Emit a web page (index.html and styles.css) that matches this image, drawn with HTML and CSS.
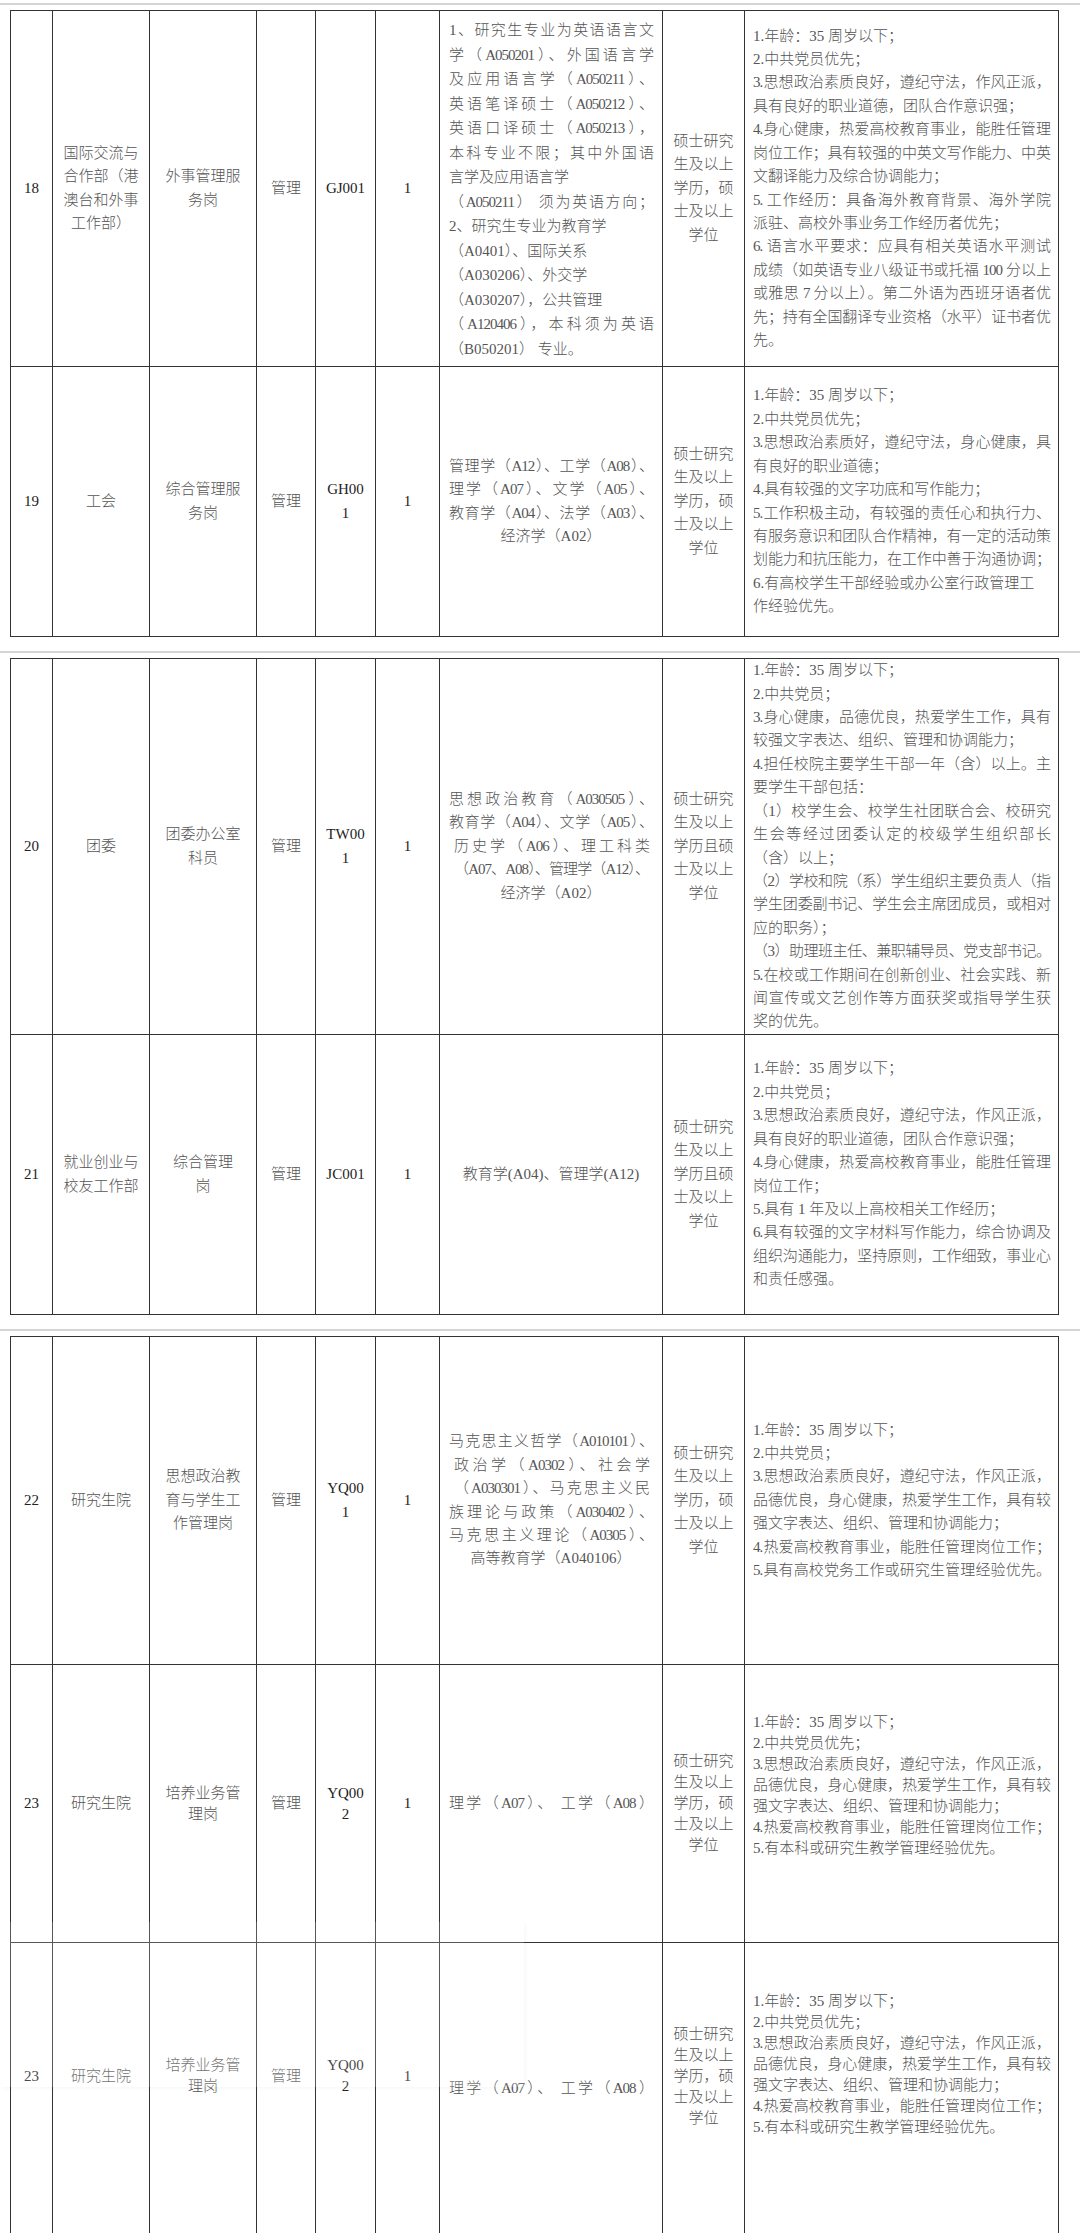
FILE: index.html
```html
<!DOCTYPE html>
<html lang="zh-CN">
<head>
<meta charset="utf-8">
<title>岗位表</title>
<link rel="stylesheet" href="styles.css">
</head>
<body>

<div class="shot first">
<table class="grid">
<colgroup><col class="c-no"><col class="c-dept"><col class="c-pos"><col class="c-type"><col class="c-code"><col class="c-num"><col class="c-major"><col class="c-edu"><col class="c-req"></colgroup>
<tr class="r18">
<td class="lat">18</td>
<td>国际交流与<br>合作部（港<br>澳台和外事<br>工作部）</td>
<td>外事管理服<br>务岗</td>
<td>管理</td>
<td class="lat">GJ001</td>
<td class="lat">1</td>
<td class="major tall">
<div class="f">1、研究生专业为英语语言文</div>
<div class="f">学（A050201）、外国语言学</div>
<div class="f">及应用语言学（A050211）、</div>
<div class="f">英语笔译硕士（A050212）、</div>
<div class="f">英语口译硕士（A050213），</div>
<div class="f">本科专业不限；其中外国语</div>
<div>言学及应用语言学</div>
<div class="f">（A050211） 须为英语方向；</div>
<div>2、研究生专业为教育学</div>
<div>（A0401）、国际关系</div>
<div>（A030206）、外交学</div>
<div>（A030207），公共管理</div>
<div class="f">（A120406），本科须为英语</div>
<div>（B050201） 专业。</div>
</td>
<td>硕士研究<br>生及以上<br>学历，硕<br>士及以上<br>学位</td>
<td class="req">
<div>1.年龄：35 周岁以下；</div>
<div>2.中共党员优先；</div>
<div class="f">3.思想政治素质良好，遵纪守法，作风正派，</div>
<div>具有良好的职业道德，团队合作意识强；</div>
<div class="f">4.身心健康，热爱高校教育事业，能胜任管理</div>
<div class="f">岗位工作；具有较强的中英文写作能力、中英</div>
<div>文翻译能力及综合协调能力；</div>
<div class="f">5. 工作经历：具备海外教育背景、海外学院</div>
<div>派驻、高校外事业务工作经历者优先；</div>
<div class="f">6. 语言水平要求：应具有相关英语水平测试</div>
<div class="f">成绩（如英语专业八级证书或托福 100 分以上</div>
<div class="f">或雅思 7 分以上）。第二外语为西班牙语者优</div>
<div class="f">先；持有全国翻译专业资格（水平）证书者优</div>
<div>先。</div>
</td>
</tr>
<tr class="r19">
<td class="lat">19</td>
<td>工会</td>
<td>综合管理服<br>务岗</td>
<td>管理</td>
<td class="lat">GH00<br>1</td>
<td class="lat">1</td>
<td class="major">
<div class="f">管理学（A12）、工学（A08）、</div>
<div class="f">理学（A07）、文学（A05）、</div>
<div class="f">教育学（A04）、法学（A03）、</div>
<div class="c">经济学（A02）</div>
</td>
<td>硕士研究<br>生及以上<br>学历，硕<br>士及以上<br>学位</td>
<td class="req">
<div>1.年龄：35 周岁以下；</div>
<div>2.中共党员优先；</div>
<div class="f">3.思想政治素质好，遵纪守法，身心健康，具</div>
<div>有良好的职业道德；</div>
<div>4.具有较强的文字功底和写作能力；</div>
<div class="f">5.工作积极主动，有较强的责任心和执行力、</div>
<div class="f">有服务意识和团队合作精神，有一定的活动策</div>
<div class="f">划能力和抗压能力，在工作中善于沟通协调；</div>
<div>6.有高校学生干部经验或办公室行政管理工</div>
<div>作经验优先。</div>
</td>
</tr>
</table>
</div>

<div class="shot">
<table class="grid">
<colgroup><col class="c-no"><col class="c-dept"><col class="c-pos"><col class="c-type"><col class="c-code"><col class="c-num"><col class="c-major"><col class="c-edu"><col class="c-req"></colgroup>
<tr class="r20">
<td class="lat">20</td>
<td>团委</td>
<td>团委办公室<br>科员</td>
<td>管理</td>
<td class="lat">TW00<br>1</td>
<td class="lat">1</td>
<td class="major">
<div class="f">思想政治教育（A030505）、</div>
<div class="f">教育学（A04）、文学（A05）、</div>
<div class="f in">历史学（A06）、理工科类</div>
<div class="f in">（A07、A08）、管理学（A12）、</div>
<div class="c">经济学（A02）</div>
</td>
<td>硕士研究<br>生及以上<br>学历且硕<br>士及以上<br>学位</td>
<td class="req">
<div>1.年龄：35 周岁以下；</div>
<div>2.中共党员；</div>
<div class="f">3.身心健康，品德优良，热爱学生工作，具有</div>
<div>较强文字表达、组织、管理和协调能力；</div>
<div class="f">4.担任校院主要学生干部一年（含）以上。主</div>
<div>要学生干部包括：</div>
<div class="f">（1）校学生会、校学生社团联合会、校研究</div>
<div class="f">生会等经过团委认定的校级学生组织部长</div>
<div>（含）以上；</div>
<div class="f">（2）学校和院（系）学生组织主要负责人（指</div>
<div class="f">学生团委副书记、学生会主席团成员，或相对</div>
<div>应的职务）；</div>
<div class="f">（3）助理班主任、兼职辅导员、党支部书记。</div>
<div class="f">5.在校或工作期间在创新创业、社会实践、新</div>
<div class="f">闻宣传或文艺创作等方面获奖或指导学生获</div>
<div>奖的优先。</div>
</td>
</tr>
<tr class="r21">
<td class="lat">21</td>
<td>就业创业与<br>校友工作部</td>
<td>综合管理<br>岗</td>
<td>管理</td>
<td class="lat">JC001</td>
<td class="lat">1</td>
<td class="major">
<div class="c">教育学(A04)、管理学(A12)</div>
</td>
<td>硕士研究<br>生及以上<br>学历且硕<br>士及以上<br>学位</td>
<td class="req">
<div>1.年龄：35 周岁以下；</div>
<div>2.中共党员；</div>
<div class="f">3.思想政治素质良好，遵纪守法，作风正派，</div>
<div>具有良好的职业道德，团队合作意识强；</div>
<div class="f">4.身心健康，热爱高校教育事业，能胜任管理</div>
<div>岗位工作；</div>
<div>5.具有 1 年及以上高校相关工作经历；</div>
<div class="f">6.具有较强的文字材料写作能力，综合协调及</div>
<div class="f">组织沟通能力，坚持原则，工作细致，事业心</div>
<div>和责任感强。</div>
</td>
</tr>
</table>
</div>

<div class="shot last">
<table class="grid">
<colgroup><col class="c-no"><col class="c-dept"><col class="c-pos"><col class="c-type"><col class="c-code"><col class="c-num"><col class="c-major"><col class="c-edu"><col class="c-req"></colgroup>
<tr class="r22">
<td class="lat">22</td>
<td>研究生院</td>
<td>思想政治教<br>育与学生工<br>作管理岗</td>
<td>管理</td>
<td class="lat">YQ00<br>1</td>
<td class="lat">1</td>
<td class="major">
<div class="f">马克思主义哲学（A010101）、</div>
<div class="f in">政治学（A0302）、社会学</div>
<div class="f in">（A030301）、马克思主义民</div>
<div class="f">族理论与政策（A030402）、</div>
<div class="f">马克思主义理论（A0305）、</div>
<div class="c">高等教育学（A040106）</div>
</td>
<td>硕士研究<br>生及以上<br>学历，硕<br>士及以上<br>学位</td>
<td class="req">
<div>1.年龄：35 周岁以下；</div>
<div>2.中共党员；</div>
<div class="f">3.思想政治素质良好，遵纪守法，作风正派，</div>
<div class="f">品德优良，身心健康，热爱学生工作，具有较</div>
<div>强文字表达、组织、管理和协调能力；</div>
<div class="f">4.热爱高校教育事业，能胜任管理岗位工作；</div>
<div class="f">5.具有高校党务工作或研究生管理经验优先。</div>
</td>
</tr>
<tr class="r23">
<td class="lat">23</td>
<td>研究生院</td>
<td>培养业务管<br>理岗</td>
<td>管理</td>
<td class="lat">YQ00<br>2</td>
<td class="lat">1</td>
<td class="major">
<div class="f">理学（A07）、 工学（A08）</div>
</td>
<td>硕士研究<br>生及以上<br>学历，硕<br>士及以上<br>学位</td>
<td class="req">
<div>1.年龄：35 周岁以下；</div>
<div>2.中共党员优先；</div>
<div class="f">3.思想政治素质良好，遵纪守法，作风正派，</div>
<div class="f">品德优良，身心健康，热爱学生工作，具有较</div>
<div>强文字表达、组织、管理和协调能力；</div>
<div class="f">4.热爱高校教育事业，能胜任管理岗位工作；</div>
<div>5.有本科或研究生教学管理经验优先。</div>
</td>
</tr>
<tr class="r23b">
<td class="lat">23</td>
<td>研究生院</td>
<td>培养业务管<br>理岗</td>
<td>管理</td>
<td class="lat">YQ00<br>2</td>
<td class="lat">1</td>
<td class="major">
<div class="f">理学（A07）、 工学（A08）</div>
</td>
<td>硕士研究<br>生及以上<br>学历，硕<br>士及以上<br>学位</td>
<td class="req">
<div>1.年龄：35 周岁以下；</div>
<div>2.中共党员优先；</div>
<div class="f">3.思想政治素质良好，遵纪守法，作风正派，</div>
<div class="f">品德优良，身心健康，热爱学生工作，具有较</div>
<div>强文字表达、组织、管理和协调能力；</div>
<div class="f">4.热爱高校教育事业，能胜任管理岗位工作；</div>
<div>5.有本科或研究生教学管理经验优先。</div>
</td>
</tr>
</table>
</div>

<div class="ghost"></div>

</body>
</html>
```

FILE: styles.css
```css
html {
  margin: 0;
  padding: 0;
  height: 2233px;
  overflow: hidden;
  background: #ffffff;
}

body {
  position: relative;
  margin: 0;
  padding: 0;
  height: 2233px;
  overflow: hidden;
  font-family: "Liberation Serif", "Noto Sans CJK SC", serif;
  font-size: 15px;
  color: #555555;
}

.shot {
  border-top: 2px solid #d4d4d4;
  padding: 5px 0 0 10px;
}

.shot.first {
  margin-top: 3px;
}

.grid {
  border-collapse: collapse;
  table-layout: fixed;
  width: 1049px;
  margin-bottom: 14px;
}

.c-no { width: 42px; }
.c-dept { width: 97px; }
.c-pos { width: 107px; }
.c-type { width: 59px; }
.c-code { width: 60px; }
.c-num { width: 64px; }
.c-major { width: 223px; }
.c-edu { width: 82px; }
.c-req { width: 314px; }

.grid td {
  border: 1px solid #333333;
  padding: 0;
  vertical-align: middle;
  text-align: center;
  line-height: 23.4px;
  font-weight: 300;
}

.grid td.lat {
  color: #222222;
  font-weight: 400;
}

.grid td.major {
  padding: 0 9px;
  text-align: left;
}

.grid td.major.tall {
  line-height: 24.5px;
  padding-top: 2px;
}

.grid td.req {
  padding: 0 8px 0 8px;
  text-align: left;
}

.f {
  text-align: justify;
  text-align-last: justify;
  letter-spacing: -1px;
}

.f.in {
  padding: 0 4px 0 5px;
}

.c {
  text-align: center;
}

.r18 td { height: 355px; }
.r18 td.major.tall { height: 353px; }
.r19 td { height: 269px; }
.r20 td { height: 375px; }
.r21 td { height: 279px; }
.r22 td { height: 327px; }

.r23 td { height: 277px; line-height: 21px; }
.r23 td.major { line-height: 23.4px; }
.r23 td.req { height: 241px; padding-bottom: 36px; }

.r23b td { height: 266px; padding-bottom: 25px; line-height: 21px; }
.r23b td.major { line-height: 23.4px; }
.r23b td.req { height: 242px; padding-bottom: 49px; }

.ghost {
  position: absolute;
  left: 0;
  top: 1922px;
  width: 524px;
  height: 165px;
  background: rgba(255, 255, 255, 0.18);
  box-shadow: 2px 2px 4px rgba(0, 0, 0, 0.03);
  pointer-events: none;
}
```
